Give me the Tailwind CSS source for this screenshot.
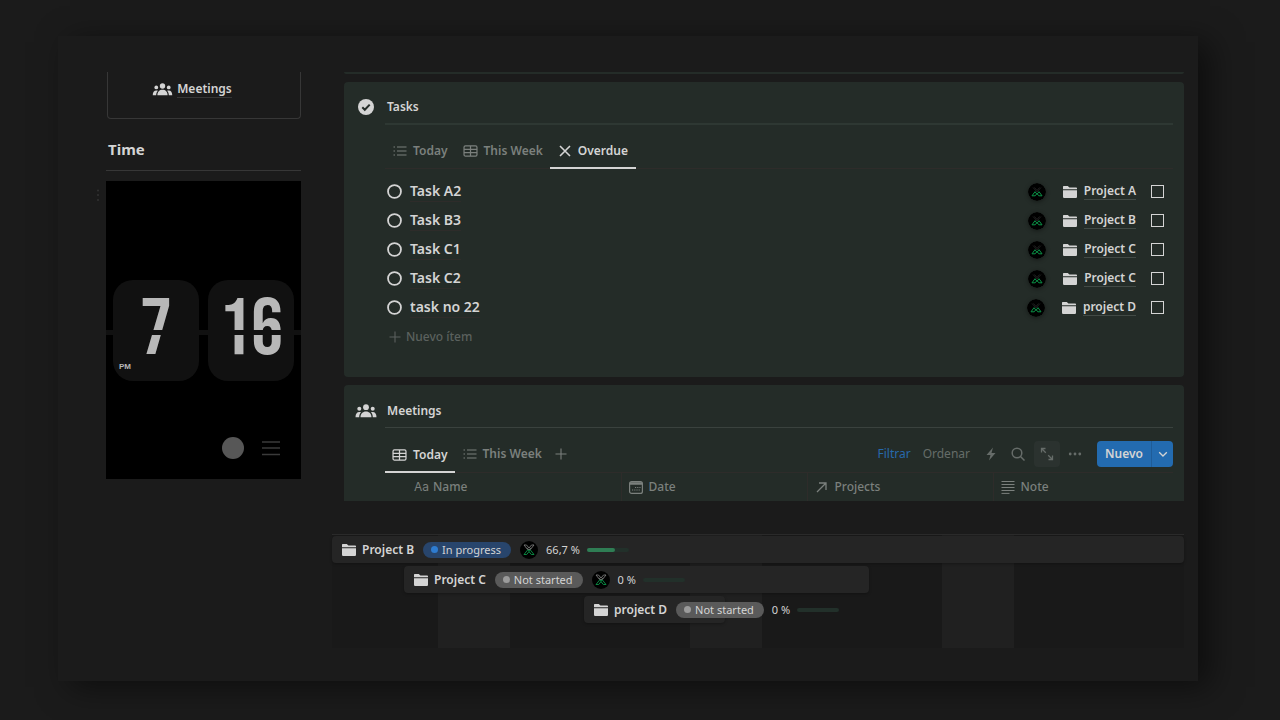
<!doctype html>
<html lang="es">

<head>
  <meta charset="UTF-8">
  <meta name="viewport" content="width=device-width, initial-scale=1.0">
  <title>Dashboard</title>
  <script src="https://cdn.jsdelivr.net/npm/@tailwindcss/browser@4"></script>
</head>

<body class="min-h-screen bg-[#1b1b1b] text-[#d4d4d4] font-['Noto_Sans','Open_Sans',sans-serif] text-xs leading-5">

  <!-- icon sprite -->
  <svg class="hidden">
    <symbol id="people" viewBox="0 0 22 14">
      <g fill="currentColor">
        <circle cx="11" cy="3.2" r="2.9" />
        <circle cx="4.3" cy="4.8" r="2" />
        <circle cx="17.7" cy="4.8" r="2" />
        <path d="M5.5 13.2c0-3.6 2.2-5.8 5.5-5.8s5.5 2.2 5.5 5.8zM.5 13.2c0-3.2 1.3-5.2 3.9-5.2.6 0 1.1.1 1.6.3-1.2 1.2-1.8 2.9-1.8 4.9zM21.5 13.2c0-3.2-1.3-5.2-3.9-5.2-.6 0-1.1.1-1.6.3 1.2 1.2 1.8 2.9 1.8 4.9z" />
      </g>
    </symbol>
    <symbol id="list" viewBox="0 0 14 14">
      <path d="M4 3h9.500M4 7h9.500M4 11h9.500M.5 3h1.500M.5 7h1.500M.5 11h1.500" stroke="currentColor" stroke-width="1.200" fill="none" />
    </symbol>
    <symbol id="table" viewBox="0 0 16 14">
      <g stroke="currentColor" stroke-width="1.300" fill="none">
        <rect x="1.100" y="1.600" width="13.800" height="10.800" rx="1.500" />
        <path d="M1 5.200h14M1 8.800h14M8 1.600v10.800" />
      </g>
    </symbol>
    <symbol id="plus" viewBox="0 0 14 14">
      <path d="M7 1.500v11M1.500 7h11" stroke="currentColor" stroke-width="1.100" fill="none" />
    </symbol>
    <symbol id="folder" viewBox="0 0 16 14">
      <path d="M1 4.300V1.600C1 1.200 1.300 1 1.700 1h4.100l1.600 1.500h6.800c.5 0 .8.3.8.8v1z" fill="currentColor" />
      <path d="M1 5.300h14v6.400c0 .8-.6 1.300-1.400 1.300H2.400C1.600 13 1 12.500 1 11.700z" fill="currentColor" />
    </symbol>
    <symbol id="logo-dim" viewBox="0 0 18 18">
      <circle cx="9" cy="9" r="9" fill="#000" />
      <path d="M5 4.500l4 4.500 4-4.500M6.500 4.500L9 7.500l2.500-3" stroke="#262626" stroke-width=".8" fill="none" />
      <path d="M4 12.800L7 8.700l2 2.600 2-2.600 3 4.100h-3.200L9.400 11M4 12.800h3.200L8.600 11" stroke="#0a9347" stroke-width="1" fill="none" />
    </symbol>
    <symbol id="logo-x" viewBox="0 0 18 18">
      <circle cx="9" cy="9" r="9" fill="#000" />
      <path d="M4 4h2.500L9 7l2.500-3H14l-3.800 4.800M4 4l3.800 4.800M7 6.800L9 9l2-2.200" stroke="#8a8a8a" stroke-width=".8" fill="none" />
      <path d="M4 13.500l3.800-4.700L9 10.300l1.200-1.500 3.800 4.700h-2.700L9 10.600l-2.300 2.900z" stroke="#0a9347" stroke-width=".9" fill="none" />
    </symbol>
  </svg>

  <div class="flow-root">
    <main class="mt-9 ml-[58px] mr-[82px] mb-9 pt-9 pb-[33px] pl-12 pr-3.5 flex gap-[31px] bg-[#1b1b1b] shadow-[12px_6px_30px_rgba(0,0,0,0.5)]">

      <aside class="w-[195px] shrink-0">
        <div class="ml-px h-[47px] pb-3 pr-6 flex items-center justify-center gap-1 border border-t-0 border-[#373737] rounded-b-sm">
          <svg class="w-[21px] h-[13px]"><use href="#people" /></svg>
          <a href="#meetings" class="font-semibold leading-4 border-b border-[#373737]">Meetings</a>
        </div>

        <h2 class="mt-[18px] ml-0.5 text-[15px] leading-6 font-bold">Time</h2>
        <hr class="mt-[9px] border-[#373737]">

        <div class="relative mt-2.5 h-[298px] bg-black text-[#b8b8b8]">
          <svg class="absolute -left-[10px] top-2 w-1 h-3 fill-[#333]" viewBox="0 0 4 12">
            <circle cx="2" cy="1.500" r="1" /><circle cx="2" cy="6" r="1" /><circle cx="2" cy="11" r="1" />
          </svg>
          <div class="pt-[99px] px-[7px] flex justify-between font-['Bebas_Neue','Roboto_Condensed','Open_Sans_Condensed','Liberation_Sans_Narrow',Roboto,sans-serif] text-[80px] leading-[100px]">
            <div class="relative w-[86px] h-[101px] rounded-[20px] bg-[#111] text-center">7
              <span class="absolute left-1.5 bottom-2.5 font-['Liberation_Sans',sans-serif] font-bold text-[8px] leading-2">PM</span>
            </div>
            <div class="w-[86px] h-[101px] rounded-[20px] bg-[#111] text-center">16</div>
          </div>
          <div class="absolute inset-x-0 top-[149px] h-[5px] bg-[#111]"></div>
          <div class="mt-14 pr-[21px] flex items-center justify-end gap-[18px]">
            <button aria-label="Theme" class="size-[22px] rounded-full bg-[#575757]"></button>
            <button aria-label="Menu" class="w-[18px] h-[22px] text-[#3a3a3a]">
              <svg viewBox="0 0 18 22"><path d="M0 5h18M0 11h18M0 17.500h18" stroke="currentColor" stroke-width="1.500" /></svg>
            </button>
          </div>
        </div>
      </aside>

      <div class="flex-1 min-w-0">
        <div class="ml-3 h-0.5 bg-[#242c28] rounded-b"></div>

        <section class="ml-3 mt-2 pt-2 pb-[26px] pl-[41px] pr-[11px] bg-[#242c28] rounded-sm">
          <div class="relative h-[35px] flex items-center border-b-2 border-[#2e3833]">
            <svg class="absolute -left-[27px] size-4" viewBox="0 0 16 16">
              <circle cx="8" cy="8" r="8" fill="currentColor" />
              <path d="M4.300 8.300l2.500 2.500 4.900-5.200" stroke="#242c28" stroke-width="2" fill="none" />
            </svg>
            <h3 class="ml-0.5 font-semibold">Tasks</h3>
          </div>

          <div role="tablist" class="mt-2 h-9 flex border-b border-[#2e2c2a] font-semibold text-[#7b807d]">
            <button role="tab" class="px-2 flex items-center gap-1.5"><svg class="size-3.5"><use href="#list" /></svg>Today</button>
            <button role="tab" class="px-[7px] flex items-center gap-1.5"><svg class="w-[15px] h-3.5"><use href="#table" /></svg>This Week</button>
            <button role="tab" aria-selected="true" class="-mb-px pt-0.5 px-2 flex items-center gap-1.5 border-b-2 border-[#d4d4d4] text-[#d4d4d4]">
              <svg class="size-3.5" viewBox="0 0 14 14"><path d="M2 2l10 10M12 2L2 12" stroke="currentColor" stroke-width="1.600" /></svg>Overdue
            </button>
          </div>

          <ul id="task-list" class="pt-2"></ul>
          <button class="h-[29px] pl-[3px] flex items-center gap-1 text-[#5b615e] font-medium">
            <svg class="size-3.5"><use href="#plus" /></svg>Nuevo ítem
          </button>
        </section>

        <section id="meetings" class="ml-3 mt-2 pt-2 pl-[41px] pr-[11px] bg-[#242c28] rounded-t-sm">
          <div class="relative h-[35px] pt-0.5 flex items-center border-b border-[#3a423e]">
            <svg class="absolute -left-[30px] w-[22px] h-3.5"><use href="#people" /></svg>
            <h3 class="ml-0.5 font-semibold">Meetings</h3>
          </div>

          <div class="mt-2 h-[37px] flex items-stretch justify-between border-b border-[#2e2c2a] text-[#7b807d]">
            <div role="tablist" class="flex font-semibold">
              <button role="tab" aria-selected="true" class="-mb-px pt-0.5 px-[7px] flex items-center gap-1.5 border-b-2 border-[#d4d4d4] text-[#d4d4d4]"><svg class="w-[15px] h-3.5"><use href="#table" /></svg>Today</button>
              <button role="tab" class="px-2 flex items-center gap-1.5"><svg class="size-3.5"><use href="#list" /></svg>This Week</button>
              <button aria-label="Add view" class="px-1"><svg class="size-3.5"><use href="#plus" /></svg></button>
            </div>
            <div class="flex items-center gap-1 text-[#666c69]">
              <button class="px-1 text-[#2769ac]">Filtrar</button>
              <button class="px-1">Ordenar</button>
              <button aria-label="Automations" class="w-[26px] h-[26px] grid place-items-center">
                <svg class="size-3.5" viewBox="0 0 14 14"><path d="M9 .5L2.500 8h4L5 13.500 11.500 6h-4z" fill="currentColor" /></svg>
              </button>
              <button aria-label="Search" class="w-5 h-[26px] grid place-items-center">
                <svg class="size-3.5" viewBox="0 0 14 14"><g stroke="currentColor" stroke-width="1.500" fill="none"><circle cx="6" cy="6" r="4.800" /><path d="M9.500 9.500l4 4" /></g></svg>
              </button>
              <button aria-label="Expand" class="ml-0.5 size-[26px] grid place-items-center rounded bg-[#2b322f]">
                <svg class="size-3.5" viewBox="0 0 14 14"><path d="M1.500 5.500v-4h4M1.500 1.500l4.300 4.300M12.500 8.500v4h-4M12.500 12.500L8.200 8.200" stroke="currentColor" stroke-width="1.300" fill="none" /></svg>
              </button>
              <button aria-label="More" class="w-[22px] h-[26px] grid place-items-center">
                <svg class="w-3.5 h-1" viewBox="0 0 14 4" fill="currentColor"><circle cx="2.200" cy="2" r="1.400" /><circle cx="7" cy="2" r="1.400" /><circle cx="11.800" cy="2" r="1.400" /></svg>
              </button>
              <div class="ml-[7px] h-[26px] flex rounded overflow-hidden bg-[#236bb0] text-[#d4d4d4]">
                <button class="w-[54px] font-semibold">Nuevo</button>
                <button aria-label="Templates" class="w-[22px] grid place-items-center border-l border-[#1f5c98]">
                  <svg class="size-2.5" viewBox="0 0 10 10"><path d="M1.200 3.200L5 7l3.800-3.800" stroke="currentColor" stroke-width="1.300" fill="none" /></svg>
                </button>
              </div>
            </div>
          </div>

          <table class="w-full table-fixed text-left text-[#7b807d]">
            <thead>
              <tr class="h-7">
                <th class="w-[236px] p-0 pl-[29px] font-medium border-r border-[#2e2c2a]">
                  <span class="flex items-center gap-1"><span class="font-['Inter',sans-serif] font-normal">Aa</span>Name</span>
                </th>
                <th class="w-[186px] p-0 pl-[7px] font-medium border-r border-[#2e2c2a]">
                  <span class="flex items-center gap-1.5"><svg class="size-3.5" viewBox="0 0 14 14"><rect x=".6" y="1.600" width="12.800" height="11.800" rx="2" stroke="currentColor" stroke-width="1.200" fill="none" /><path d="M1 3.500h12" stroke="currentColor" stroke-width="2.500" /><path d="M6 7.500h5.500M3 10h8.500" stroke="currentColor" stroke-dasharray="1.200 1" /></svg>Date</span>
                </th>
                <th class="w-[186px] p-0 pl-[7px] font-medium border-r border-[#2e2c2a]">
                  <span class="flex items-center gap-1.5"><svg class="size-3.5" viewBox="0 0 14 14"><path d="M2 12L11 3M4 3h7v7" stroke="currentColor" stroke-width="1.300" fill="none" /></svg>Projects</span>
                </th>
                <th class="p-0 pl-[7px] font-medium">
                  <span class="flex items-center gap-1.5"><svg class="size-3.5" viewBox="0 0 14 14"><path d="M.5 1.500h13M.5 4.500h13M.5 7.500h13M.5 10.500h13M.5 13.400h8" stroke="currentColor" stroke-width="1" /></svg>Note</span>
                </th>
              </tr>
            </thead>
          </table>
        </section>

        <!-- timeline, 36px per day with weekends shaded -->
        <section class="relative mt-[33px] h-[114px] border-t border-[#2b2b2b] bg-[#191919]">
          <div class="absolute left-[106px] inset-y-0 w-[72px] bg-[#202020]"></div>
          <div class="absolute left-[358px] inset-y-0 w-[72px] bg-[#202020]"></div>
          <div class="absolute left-[610px] inset-y-0 w-[72px] bg-[#202020]"></div>
          <div id="timeline" class="relative pt-px grid gap-[3px]"></div>
        </section>
      </div>
    </main>
  </div>

  <script>
    const tasks = [
      ["Task A2", "Project A"],
      ["Task B3", "Project B"],
      ["Task C1", "Project C"],
      ["Task C2", "Project C"],
      ["task no 22", "project D"],
    ];

    document.getElementById("task-list").innerHTML = tasks.map(([name, project]) => `
      <li class="h-[29px] pl-0.5 pr-[9px] flex items-center">
        <svg class="size-[15px]" viewBox="0 0 16 16"><circle cx="8" cy="8" r="6.900" stroke="currentColor" stroke-width="1.900" fill="none" /></svg>
        <a href="#" class="ml-2 mr-auto text-sm leading-5 font-semibold border-b border-[#2e2c2a]">${name}</a>
        <svg class="size-[18px] rounded-full shadow-[0_1px_4px_rgba(0,0,0,0.4)]"><use href="#logo-dim" /></svg>
        <svg class="ml-4 w-4 h-3.5"><use href="#folder" /></svg>
        <a href="#" class="ml-1.5 leading-4 font-semibold border-b border-[#424a46]">${project}</a>
        <input type="checkbox" aria-label="${name}" class="ml-[15px] appearance-none size-[13px] border-[1px] border-[#d4d4d4]">
      </li>`).join("");

    const bars = [
      { name: "Project B", status: "In progress", pct: "66,7 %", done: 66.7, start: 0, width: 0, logo: true,
        pill: "bg-[#28456c]", dot: "bg-[#2e7cd1]" },
      { name: "Project C", status: "Not started", pct: "0 %", done: 0, start: 72, width: 465, logo: true,
        pill: "bg-[#5a5a5a]", dot: "bg-[#9b9b9b]" },
      { name: "project D", status: "Not started", pct: "0 %", done: 0, start: 252, width: 141, logo: false,
        pill: "bg-[#5a5a5a]", dot: "bg-[#9b9b9b]" },
    ];

    document.getElementById("timeline").innerHTML = bars.map(b => `
      <div class="h-[27px] pl-[9px] flex items-center whitespace-nowrap rounded-sm bg-[#252525] shadow-[0_1px_3px_rgba(0,0,0,0.3)]"
        style="margin-left:${b.start}px;${b.width ? `width:${b.width}px` : ""}">
        <svg class="w-4 h-3.5 shrink-0"><use href="#folder" /></svg>
        <span class="ml-[5px] font-semibold">${b.name}</span>
        <span class="ml-[9px] pl-2 pr-2.5 h-4 shrink-0 flex items-center gap-1 rounded-full text-[11px] leading-4 ${b.pill}"><i class="size-[7px] rounded-full ${b.dot}"></i>${b.status}</span>
        ${b.logo ? `<svg class="ml-[9px] size-[18px] shrink-0"><use href="#logo-x" /></svg>` : ""}
        <span class="ml-2 text-[11px]">${b.pct}</span>
        <span class="ml-[7px] w-[42px] h-1 shrink-0 rounded-full bg-[#22302a]"><span class="block h-full rounded-full bg-[#2f7d54]" style="width:${b.done}%"></span></span>
      </div>`).join("");
  </script>

</body>

</html>
